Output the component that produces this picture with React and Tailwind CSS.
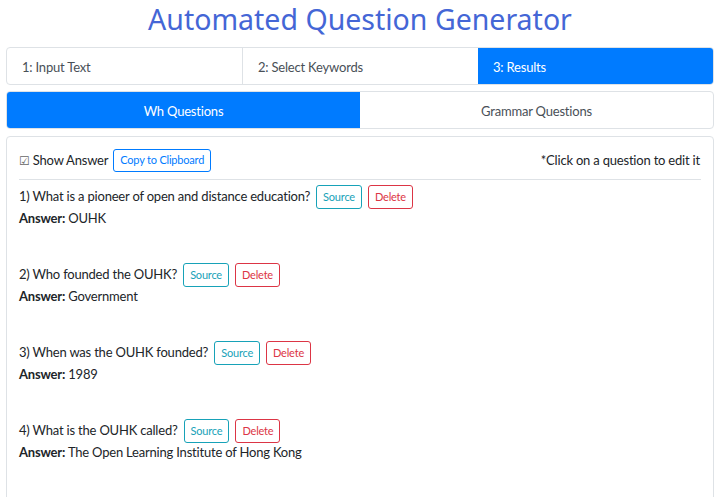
import { useState } from "react";

const questions = [
  { q: "What is a pioneer of open and distance education?", a: "OUHK" },
  { q: "Who founded the OUHK?", a: "Government" },
  { q: "When was the OUHK founded?", a: "1989" },
  { q: "What is the OUHK called?", a: "The Open Learning Institute of Hong Kong" },
];

const steps = ["1: Input Text", "2: Select Keywords", "3: Results"];

const App = () => {
  const [tab, setTab] = useState(0);
  const [showAnswer, setShowAnswer] = useState(true);

  return (
    <div className="min-h-screen bg-white px-[6px] text-[#212529] tracking-[-0.2px]" style={{ fontFamily: 'Lato, "Noto Sans", sans-serif' }}>
      <h1 className="text-center text-[28.5px] leading-[38px] tracking-normal text-[#4466d6]" style={{ fontFamily: '"Noto Sans", sans-serif' }}>
        Automated Question Generator
      </h1>

      <div className="mt-[9px] flex h-[38px] rounded border border-[#dee2e6] overflow-hidden text-[13px]">
        {steps.map((s, i) => (
          <div
            key={s}
            className={`flex-1 flex items-center pl-[15px] pt-[3px] ${i === 2 ? "bg-[#007bff] text-white" : "text-[#495057]"} ${i === 1 ? "border-l border-[#dee2e6]" : ""}`}
          >
            {s}
          </div>
        ))}
      </div>

      <div className="mt-[6px] flex h-[38px] rounded border border-[#dee2e6] overflow-hidden text-[13px]">
        {["Wh Questions", "Grammar Questions"].map((t, i) => (
          <button
            key={t}
            onClick={() => setTab(i)}
            className={`flex-1 flex items-center justify-center pt-[3px] ${tab === i ? "bg-[#007bff] text-white" : "text-[#495057]"}`}
          >
            {t}
          </button>
        ))}
      </div>

      <div className="mt-[7px] rounded border border-[#dee2e6] px-[12px] pt-[12px] pb-[20px]">
        <div className="flex items-center justify-between pb-[7px] border-b border-[#dee2e6]">
          <div className="flex items-center">
            <label className="flex items-center text-[13px] cursor-pointer" onClick={() => setShowAnswer(!showAnswer)}>
              <span className="text-[12px] text-[#666] mr-[3px]">{showAnswer ? "☑" : "☐"}</span>
              Show Answer
            </label>
            <button className="ml-[5px] h-[23px] px-[6px] rounded-[3px] border border-[#007bff] text-[#007bff] text-[11px]">
              Copy to Clipboard
            </button>
          </div>
          <span className="text-[13px] pr-[1px]">*Click on a question to edit it</span>
        </div>

        {questions.map((item, i) => (
          <div key={i} className="pt-[5px] h-[78px]">
            <div className="flex items-center text-[13px]">
              <span>{i + 1}) {item.q}</span>
              <button className="ml-[6px] h-[24px] px-[6px] rounded-[3px] border border-[#17a2b8] text-[#17a2b8] text-[11px]">Source</button>
              <button className="ml-[6px] h-[24px] px-[6px] rounded-[3px] border border-[#dc3545] text-[#dc3545] text-[11px]">Delete</button>
            </div>
            {showAnswer && (
              <div className="mt-[-1px] text-[13px] leading-[20px]">
                <b>Answer:</b> {item.a}
              </div>
            )}
          </div>
        ))}
      </div>
    </div>
  );
};

export default App;
